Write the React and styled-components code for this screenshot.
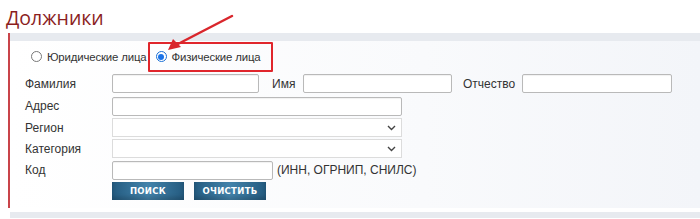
import React from 'react';
import styled, { createGlobalStyle } from 'styled-components';

const GlobalStyle = createGlobalStyle`
  body {
    margin: 0;
    background: #fff;
    font-family: "Liberation Sans", Arial, sans-serif;
    color: #333;
  }
`;

const Page = styled.div`
  position: relative;
  width: 700px;
  height: 219px;
  overflow: hidden;
`;

const Title = styled.h1`
  margin: 0;
  padding: 6px 0 0 6px;
  height: 27px;
  font-family: "Open Sans", sans-serif;
  font-weight: 400;
  font-size: 19.5px;
  line-height: 23px;
  color: #8b1e1e;
`;

const Panel = styled.div`
  margin-left: 8px;
  border-left: 2px solid #c9444a;
  background: linear-gradient(to right, #ffffff 0%, #f9fafc 60%, #f3f5f9 100%);
`;

const TopBand = styled.div`
  height: 8px;
  background: #e7eaef;
`;

const Body = styled.div`
  padding: 0 0 8px 15px;
`;

const RadioRow = styled.div`
  display: flex;
  align-items: center;
  height: 31px;
  padding-left: 6px;
  font-size: 11.4px;
  letter-spacing: -0.15px;
`;

const RadioLabel = styled.label`
  display: flex;
  align-items: center;
  gap: 5px;
  white-space: nowrap;
`;

const Highlight = styled.span`
  display: flex;
  align-items: center;
  height: 26px;
  margin-left: 1px;
  padding: 0 10px 0 6px;
  border: 2px solid #e0262c;
  border-radius: 1px;
`;

const Radio = styled.span`
  width: 9px;
  height: 9px;
  border-radius: 50%;
  border: 1px solid ${p => (p.checked ? '#1a6fd6' : '#777')};
  background: #fff;
  display: inline-flex;
  align-items: center;
  justify-content: center;
  &::after {
    content: '';
    width: 6px;
    height: 6px;
    border-radius: 50%;
    background: ${p => (p.checked ? '#1a73e8' : 'transparent')};
  }
`;

const Row = styled.div`
  display: flex;
  align-items: center;
  height: ${p => p.h || 21}px;
  font-size: 12px;
`;

const Label = styled.span`
  width: ${p => p.w || 87}px;
  flex: none;
  white-space: nowrap;
`;

const Input = styled.div`
  box-sizing: border-box;
  width: ${p => p.w}px;
  height: 19px;
  background: #fff;
  border: 1px solid #b9b9b9;
  border-radius: 2px;
  box-shadow: inset 0 1px 1px rgba(0, 0, 0, 0.06);
  flex: none;
`;

const Select = styled.div`
  box-sizing: border-box;
  width: 290px;
  height: 19px;
  background: #fff;
  border: 1px solid #dcdcdc;
  display: flex;
  align-items: center;
  justify-content: flex-end;
  padding-right: 5px;
  flex: none;
`;

const Hint = styled.span`
  margin-left: 4px;
  white-space: nowrap;
`;

const Buttons = styled.div`
  display: flex;
  gap: 10px;
  padding-left: 87px;
  margin-top: 1px;
`;

const Button = styled.div`
  width: 72px;
  height: 18px;
  display: flex;
  align-items: center;
  justify-content: center;
  color: #fff;
  font-family: "DejaVu Sans", sans-serif;
  font-weight: 700;
  font-size: 8.5px;
  letter-spacing: 0.3px;
  background: linear-gradient(to right, #245b80 0%, #4383ab 50%, #245b80 100%);
  box-shadow: inset 0 -3px 4px rgba(0, 0, 0, 0.18);
`;

const Bottom = styled.div`
  margin: 4px 0 0 10px;
  height: 6px;
  background: #e7eaef;
`;

const Arrow = styled.svg`
  position: absolute;
  left: 160px;
  top: 12px;
  pointer-events: none;
`;

const Chevron = () => (
  <svg width="9" height="6" viewBox="0 0 9 6">
    <path d="M1 1 L4.5 4.5 L8 1" fill="none" stroke="#444" strokeWidth="1.4" />
  </svg>
);

export default function App() {
  return (
    <Page>
      <GlobalStyle />
      <Title>Должники</Title>
      <Panel>
        <TopBand />
        <Body>
          <RadioRow>
            <RadioLabel>
              <Radio />
              Юридические лица
            </RadioLabel>
            <Highlight>
              <RadioLabel>
                <Radio checked />
                Физические лица
              </RadioLabel>
            </Highlight>
          </RadioRow>
          <Row h={23}>
            <Label>Фамилия</Label>
            <Input w={147} />
            <Label w={31} style={{ marginLeft: 13 }}>Имя</Label>
            <Input w={149} />
            <Label w={59} style={{ marginLeft: 11 }}>Отчество</Label>
            <Input w={150} />
          </Row>
          <Row h={22}>
            <Label>Адрес</Label>
            <Input w={290} />
          </Row>
          <Row>
            <Label>Регион</Label>
            <Select><Chevron /></Select>
          </Row>
          <Row>
            <Label>Категория</Label>
            <Select><Chevron /></Select>
          </Row>
          <Row h={22}>
            <Label>Код</Label>
            <Input w={161} />
            <Hint>(ИНН, ОГРНИП, СНИЛС)</Hint>
          </Row>
          <Buttons>
            <Button>ПОИСК</Button>
            <Button>ОЧИСТИТЬ</Button>
          </Buttons>
        </Body>
      </Panel>
      <Bottom />
      <Arrow width="80" height="45" viewBox="0 0 80 45">
        <line x1="72" y1="4" x2="16" y2="33" stroke="#d9262c" strokeWidth="2.5" strokeLinecap="round" />
        <path d="M8 38 L13 27 L21 35 Z" fill="#d9262c" />
      </Arrow>
    </Page>
  );
}
